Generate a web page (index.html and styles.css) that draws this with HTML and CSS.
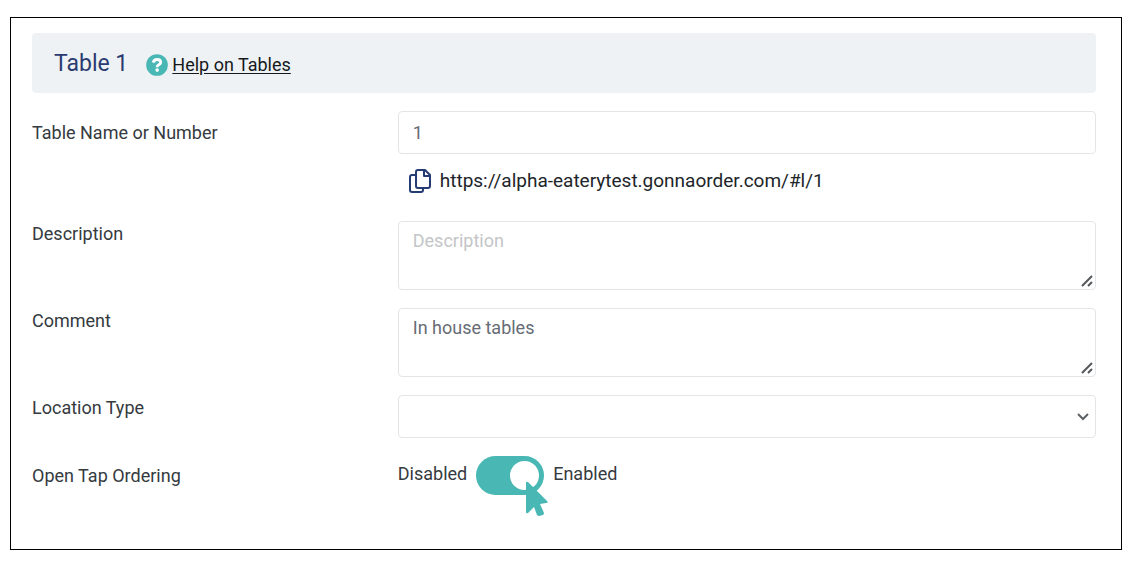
FILE: index.html
```html
<!DOCTYPE html>
<html lang="en">
  <head>
    <meta charset="UTF-8" />
    <meta name="viewport" content="width=device-width, initial-scale=1.0" />
    <title>Table 1</title>
    <link rel="stylesheet" href="styles.css">
  </head>

  <body>
    <main class="panel">
      <header class="panel-header">
        <h1>Table 1</h1>
        <a class="help" href="#help">
          <svg class="help-icon" viewBox="0 0 512 512" aria-hidden="true">
            <circle cx="256" cy="256" r="252" fill="#49b8b5" />
            <path d="M170 200c10-46 42-72 88-72 48 0 84 28 84 70 0 56-82 52-82 100v8" fill="none" stroke="#fff" stroke-width="66" />
            <circle cx="260" cy="374" r="42" fill="#fff" />
          </svg>
          <span>Help on Tables</span>
        </a>
      </header>

      <form class="form">
        <div class="row row-center">
          <label for="name">Table Name or Number</label>
          <input class="field" type="text" id="name" value="1" />
        </div>

        <div class="link-row">
          <button class="copy" type="button" aria-label="Copy link">
            <svg viewBox="0 0 22 24" aria-hidden="true">
              <g fill="none" stroke="#253b73" stroke-width="2" stroke-linejoin="round">
                <path d="M6 6H3a2 2 0 0 0-2 2v13a2 2 0 0 0 2 2h9a2 2 0 0 0 2-2v-2" />
                <path d="M9 1h7l5 5v11a2 2 0 0 1-2 2H9a2 2 0 0 1-2-2V3a2 2 0 0 1 2-2z" />
                <path d="M15 1v6h6" />
              </g>
            </svg>
          </button>
          <span class="url">https://alpha-eaterytest.gonnaorder.com/#l/1</span>
        </div>

        <div class="row">
          <label for="description">Description</label>
          <div class="area">
            <textarea class="field" id="description" placeholder="Description"></textarea>
            <svg class="grip" viewBox="0 0 12 12" aria-hidden="true">
              <path d="M1 11L11 1M7 11l4-4" />
            </svg>
          </div>
        </div>

        <div class="row">
          <label for="comment">Comment</label>
          <div class="area">
            <textarea class="field" id="comment">In house tables</textarea>
            <svg class="grip" viewBox="0 0 12 12" aria-hidden="true">
              <path d="M1 11L11 1M7 11l4-4" />
            </svg>
          </div>
        </div>

        <div class="row">
          <label for="location">Location Type</label>
          <div class="area">
            <select class="field" id="location">
              <option></option>
            </select>
            <svg class="chevron" viewBox="0 0 12 8" aria-hidden="true">
              <path d="M1 1l5 5 5-5" />
            </svg>
          </div>
        </div>

        <div class="row row-center">
          <label for="ordering">Open Tap Ordering</label>
          <div class="toggle">
            <span class="state">Disabled</span>
            <div class="switch-wrap">
              <input class="switch" type="checkbox" id="ordering" checked />
              <svg class="pointer" viewBox="0 0 22 36" aria-hidden="true">
                <path d="M0 2Q0 0 2 1L21 20Q23 22 20 22L14 23L18 32Q18 33 17 34L13 35Q12 35 11 34L8 26L2 32Q0 33 0 31Z" fill="#49b8b5" />
              </svg>
            </div>
            <span class="state">Enabled</span>
          </div>
        </div>
      </form>
    </main>
  </body>
</html>
```

FILE: styles.css
```css
* {
  box-sizing: border-box;
}

body {
  margin: 17px 13px 19px 10px;
  font-family: Roboto, sans-serif;
  font-size: 18px;
  line-height: 24px;
  color: #343a40;
  background: #fff;
}

.panel {
  min-height: calc(100vh - 36px);
  padding: 15px 25px 21px 21px;
  border: 1px solid #000;
}

.panel-header {
  display: flex;
  align-items: center;
  gap: 18px;
  height: 60px;
  padding: 0 22px;
  border-radius: 4px;
  background: #eef2f5;
}

h1 {
  margin: 0;
  padding-top: 2px;
  font-size: 23px;
  font-weight: 400;
  color: #2b3b70;
}

.help {
  display: flex;
  align-items: center;
  gap: 4px;
  padding-top: 4px;
  color: #16191c;
  text-underline-offset: 2px;
}

.help-icon {
  width: 22px;
  height: 22px;
}

.form {
  display: flex;
  flex-direction: column;
  gap: 18px;
  padding-top: 18px;
}

.row {
  display: grid;
  grid-template-columns: minmax(0, 11fr) minmax(0, 21fr);
  align-items: start;
}

.row label {
  padding-top: 1px;
}

.row-center {
  align-items: center;
}

.row-center label {
  padding-top: 0;
}

.field {
  display: block;
  width: 100%;
  height: 43px;
  padding: 7px 14px;
  border: 1px solid #e3e5e7;
  border-radius: 4px;
  font: inherit;
  color: #676c75;
  background: #fff;
}

textarea.field {
  height: 69px;
  resize: none;
}

.field::placeholder {
  color: #c3c5c7;
}

select.field {
  appearance: none;
}

.area {
  position: relative;
}

.grip {
  position: absolute;
  right: 3px;
  bottom: 3px;
  width: 12px;
  height: 12px;
  fill: none;
  stroke: #55585c;
  stroke-width: 2;
}

.chevron {
  position: absolute;
  top: 18px;
  right: 7px;
  width: 12px;
  height: 8px;
  fill: none;
  stroke: #5d6268;
  stroke-width: 2;
}

.link-row {
  display: flex;
  align-items: center;
  gap: 9px;
  margin: -3px 0 10px 34.375%;
  padding-left: 11px;
}

.copy {
  width: 22px;
  height: 24px;
  padding: 0;
  border: 0;
  background: none;
}

.copy svg {
  display: block;
}

.url {
  font-size: 19px;
  color: #212529;
}

.toggle {
  display: flex;
  align-items: center;
  gap: 9px;
}

.state {
  padding-bottom: 4px;
}

.switch-wrap {
  position: relative;
  height: 39px;
}

.switch {
  display: block;
  width: 68px;
  height: 39px;
  margin: 0;
  padding: 5px;
  border-radius: 20px;
  background: #ced4da;
  appearance: none;
}

.switch::before {
  content: "";
  display: block;
  width: 29px;
  height: 29px;
  border-radius: 50%;
  background: #fff;
}

.switch:checked {
  background: #49b8b5;
}

.switch:checked::before {
  margin-left: auto;
}

.pointer {
  position: absolute;
  top: 25px;
  left: 50px;
  width: 22px;
  height: 36px;
}
```
